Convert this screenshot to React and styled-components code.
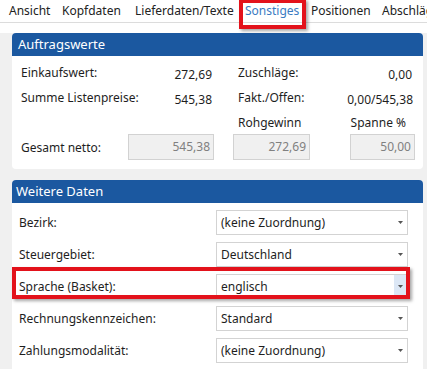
import React from "react";
import styled, { createGlobalStyle } from "styled-components";

const Global = createGlobalStyle`
  html, body { margin: 0; padding: 0; }
  body {
    background: #f0f0f0;
    font-family: "Noto Sans", "Open Sans", "Liberation Sans", sans-serif;
    font-size: 12px;
    color: #1e1e1e;
    overflow: hidden;
  }
`;

const Page = styled.div`
  width: 427px;
  height: 369px;
  overflow: hidden;
  background: #f0f0f0;
`;

const Top = styled.div`
  background: #ffffff;
  padding-bottom: 10px;
`;

const TabBar = styled.div`
  display: flex;
  height: 22px;
  align-items: center;
  padding-left: 9px;
  border-bottom: 1px solid #dcdcdc;
  white-space: nowrap;
`;

const Tab = styled.div`
  position: relative;
  flex: 0 0 ${(p) => p.$w}px;
  color: ${(p) => (p.$active ? "#3a7bc2" : "#222")};
  line-height: 22px;
`;

const Mark = styled.div`
  position: absolute;
  border: 4px solid #e3121b;
  box-shadow: 2px 2px 3px rgba(0, 0, 0, 0.35);
  pointer-events: none;
  z-index: 2;
`;

const Main = styled.div`
  padding: 0 4px 0 12px;
`;

const Card = styled.div`
  background: #ffffff;
  border-radius: 4px;
  margin-bottom: 11px;
`;

const CardHead = styled.div`
  height: 23px;
  background: #1b58a0;
  color: #ffffff;
  border-radius: 4px 4px 0 0;
  font-size: 13px;
  line-height: 23px;
  padding-left: ${(p) => p.$pad}px;
`;

const ValuesGrid = styled.div`
  display: grid;
  grid-template-columns: 107px 86px 19px 77px 40px 65px;
  grid-template-rows: 25px 25px 24px 26px;
  padding: 4px 8px 9px 9px;
  align-items: center;
`;

const Label = styled.div`
  white-space: nowrap;
  padding-left: ${(p) => p.$indent || 0}px;
  grid-column: ${(p) => p.$col || "auto"};
`;

const Value = styled.div`
  white-space: nowrap;
  text-align: right;
  padding-top: 3px;
  padding-right: ${(p) => p.$pr || 0}px;
  grid-column: ${(p) => p.$col};
`;

const Caption = styled.div`
  white-space: nowrap;
  text-align: ${(p) => p.$align || "left"};
  padding-left: ${(p) => p.$pl || 0}px;
  padding-right: ${(p) => p.$pr || 0}px;
  grid-column: ${(p) => p.$col};
`;

const ReadOnly = styled.div`
  height: 26px;
  box-sizing: border-box;
  background: #f0f0f0;
  border: 1px solid #d2d2d2;
  color: #808080;
  text-align: right;
  line-height: 24px;
  padding-right: 3px;
  grid-column: ${(p) => p.$col};
`;

const FormBody = styled.div`
  display: flex;
  flex-direction: column;
  gap: 7px;
  padding: 7px 15px 10px 7px;
`;

const FormRow = styled.div`
  position: relative;
  display: grid;
  grid-template-columns: 1fr 192px;
  height: 25px;
  align-items: center;
`;

const Select = styled.div`
  display: flex;
  height: 25px;
  box-sizing: border-box;
  border: 1px solid #d3d3d3;
  background: #fff;
`;

const SelectText = styled.div`
  flex: 1;
  line-height: 23px;
  padding-left: 4px;
  white-space: nowrap;
  overflow: hidden;
`;

const SelectBtn = styled.div`
  width: 13px;
  display: flex;
  align-items: center;
  justify-content: center;
  background: ${(p) => (p.$hover ? "#dce7f5" : "transparent")};
`;

const Arrow = () => (
  <svg width="5" height="3" viewBox="0 0 5 3">
    <path d="M0 0 H5 L2.5 3 Z" fill="#555" />
  </svg>
);

const tabs = [
  ["Ansicht", 53],
  ["Kopfdaten", 73],
  ["Lieferdaten/Texte", 110],
  ["Sonstiges", 66, true],
  ["Positionen", 71],
  ["Abschläge", 80],
];

const rows = [
  ["Bezirk:", "(keine Zuordnung)"],
  ["Steuergebiet:", "Deutschland"],
  ["Sprache (Basket):", "englisch", true],
  ["Rechnungskennzeichen:", "Standard"],
  ["Zahlungsmodalität:", "(keine Zuordnung)"],
];

export default function App() {
  return (
    <Page>
      <Global />
      <Top>
        <TabBar>
          {tabs.map(([t, w, a]) => (
            <Tab key={t} $w={w} $active={a}>
              {t}
              {a && (
                <Mark style={{ left: -6, top: -1, width: 59, height: 22 }} />
              )}
            </Tab>
          ))}
        </TabBar>
      </Top>
      <Main>
        <Card>
          <CardHead $pad={6}>Auftragswerte</CardHead>
          <ValuesGrid>
            <Label $col="1">Einkaufswert:</Label>
            <Value $col="2" $pr={2}>272,69</Value>
            <Label $col="4" $indent={5}>Zuschläge:</Label>
            <Value $col="5 / 7" $pr={3}>0,00</Value>

            <Label $col="1">Summe Listenpreise:</Label>
            <Value $col="2" $pr={2}>545,38</Value>
            <Label $col="4" $indent={5}>Fakt./Offen:</Label>
            <Value $col="5 / 7" $pr={2}>0,00/545,38</Value>

            <Caption $col="4" $pl={5}>Rohgewinn</Caption>
            <Caption $col="6" $align="right" $pr={9}>Spanne %</Caption>

            <Label $col="1">Gesamt netto:</Label>
            <ReadOnly $col="2">545,38</ReadOnly>
            <ReadOnly $col="4">272,69</ReadOnly>
            <ReadOnly $col="6">50,00</ReadOnly>
          </ValuesGrid>
        </Card>
        <Card>
          <CardHead $pad={4}>Weitere Daten</CardHead>
          <FormBody>
            {rows.map(([l, v, hl]) => (
              <FormRow key={l}>
                <Label>{l}</Label>
                <Select>
                  <SelectText>{v}</SelectText>
                  <SelectBtn $hover={hl}>
                    <Arrow />
                  </SelectBtn>
                </Select>
                {hl && (
                  <Mark style={{ left: -7, top: -7, width: 390, height: 24 }} />
                )}
              </FormRow>
            ))}
          </FormBody>
        </Card>
      </Main>
    </Page>
  );
}
